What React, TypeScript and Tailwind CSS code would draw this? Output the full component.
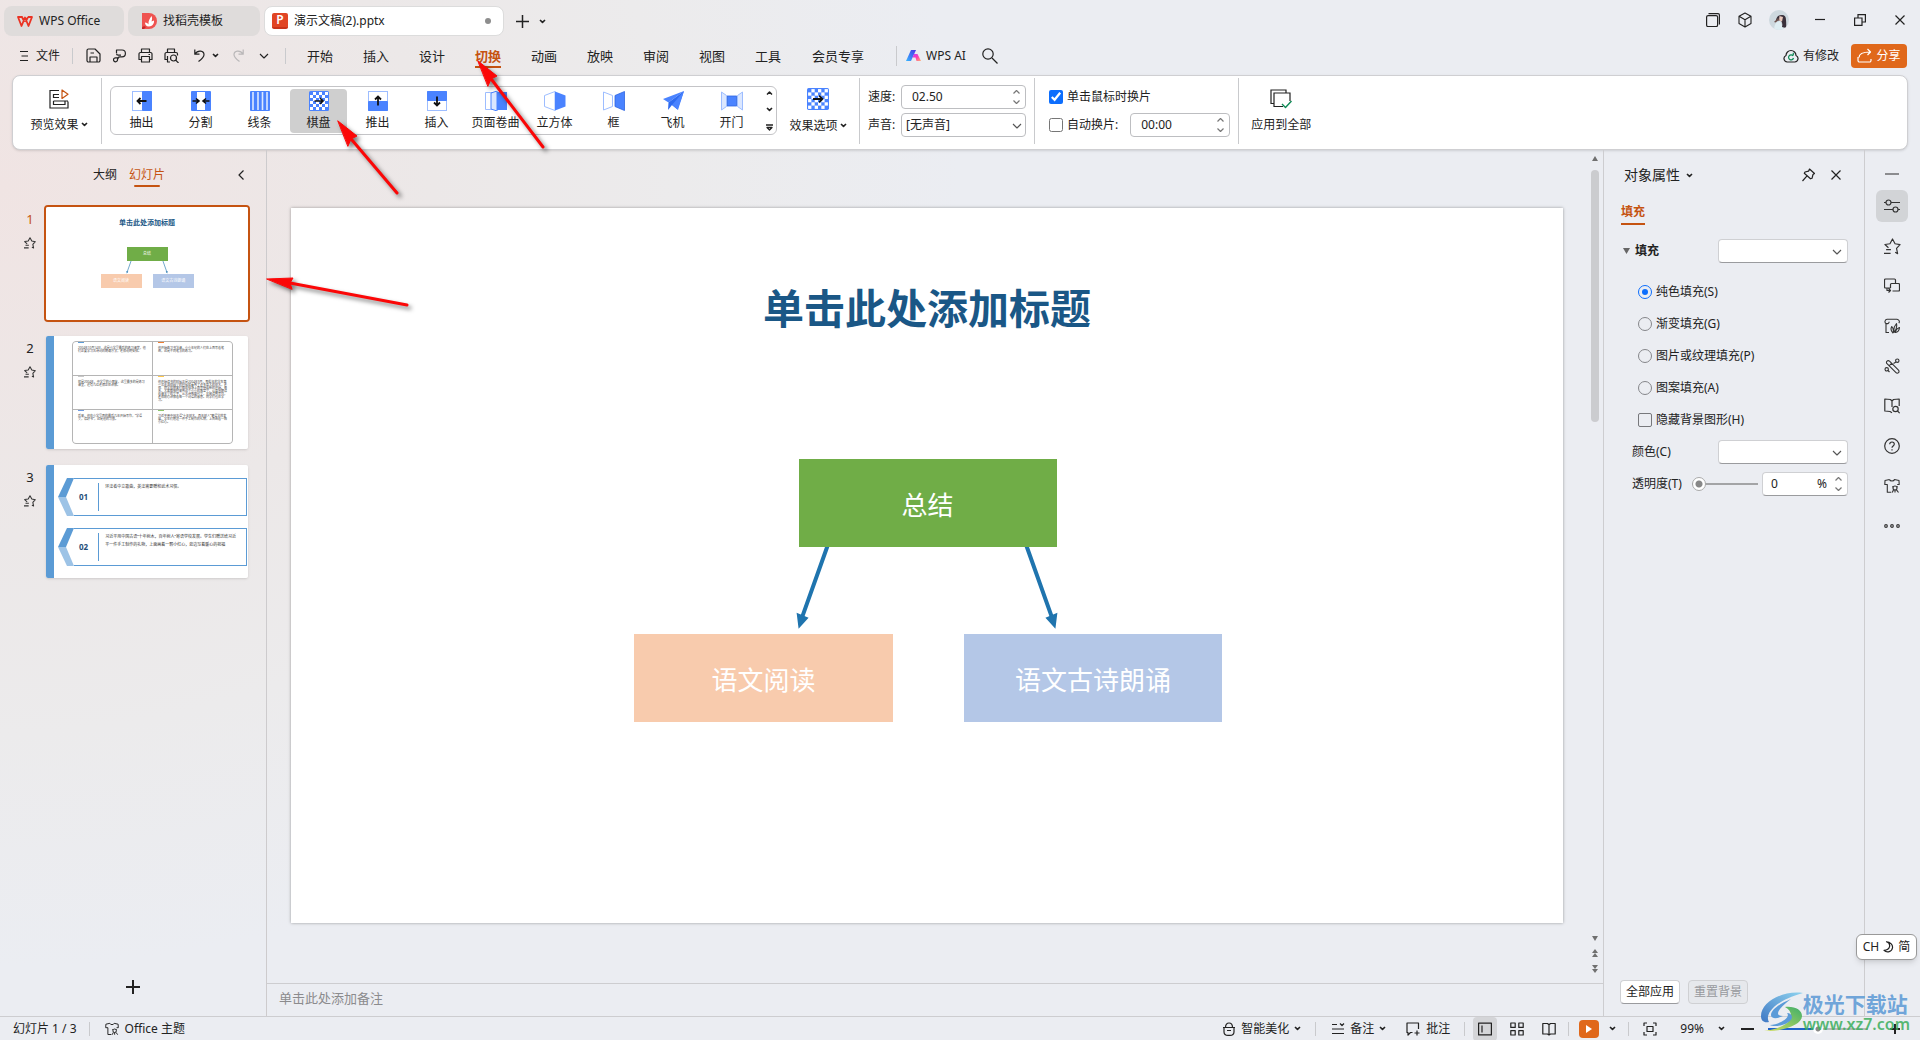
import React from 'react';

type Kids = { children?: React.ReactNode };

function Ico({ w = 16, h, vb, cls = '', sw = 1.2, children }: Kids & { w?: number; h?: number; vb?: string; cls?: string; sw?: number }) {
  const hh = h ?? w;
  return (
    <svg
      width={w}
      height={hh}
      viewBox={vb ?? `0 0 ${w} ${hh}`}
      fill="none"
      stroke="currentColor"
      strokeWidth={sw}
      strokeLinejoin="round"
      className={`shrink-0 ${cls}`}
      aria-hidden="true"
    >
      {children}
    </svg>
  );
}

const Caret = ({ cls = '' }: { cls?: string }) => (
  <Ico w={7} h={5} sw={1.6} cls={cls}><path d="M1 1l2.5 2.4L6 1" /></Ico>
);
const Chevron = ({ cls = '' }: { cls?: string }) => (
  <Ico w={10} h={6} sw={1.1} cls={cls}><path d="M1 1l4 4 4-4" /></Ico>
);
const Rule = ({ cls = '' }: { cls?: string }) => <span className={`w-px shrink-0 bg-[#c9cacd] ${cls}`} />;

function Spinner() {
  return (
    <span className="flex shrink-0 flex-col gap-1.5 text-[#777]">
      <Ico w={7} h={4}><path d="M.5 3.5l3-3 3 3" /></Ico>
      <Ico w={7} h={4}><path d="M.5 .5l3 3 3-3" /></Ico>
    </span>
  );
}

/* ---------- shared icons ---------- */

const StarMotion = ({ size }: { size: number }) => (
  <Ico w={size} vb="0 0 16 16" sw={size < 14 ? 1.4 : 1.1}>
    <path d="M4.200 9.200L.9 6.100l4.700-.7L8 .9l2.400 4.500 4.700.8-3.300 3.500 1 5-2.300-1.200" />
    <path d="M2 11h4.500M0 14.500h6.200" />
  </Ico>
);

const Shirt = ({ size }: { size: number }) => (
  <Ico w={size} vb="0 0 16 16" sw={1.1}>
    <path d="M5.5 1.500L1 2.500.8 6.500h2.500v7.800h4M5.500 1.500c.5 2 4.500 2 5 0L15 2.500l.2 4h-2" />
    <circle cx="11" cy="10" r="2" />
    <path d="M9.500 11.800l-1.200 2.700M12.500 11.800l2 2.700M11 12v2.500M8.300 8.500l1 .6M13.700 8.500l-1 .6" />
  </Ico>
);

/* ---------- title bar ---------- */

function TitleBar() {
  return (
    <header className="flex h-9 items-end pl-1 pr-[15px]">
      <div className="flex gap-1">
        <button className="flex h-[30px] w-[120px] items-center gap-1.5 rounded-lg bg-[#dfdcdb] pl-[13px]">
          <Ico w={16} h={11} sw={1.8} cls="text-[#ea3323]">
            <path d="M1 1h4l-.2 0L1 1l3.500 9L8 1.500 11.500 10 15 1h-4M5 1l2.500 5M8.500 6L11 1" />
          </Ico>
          <span>WPS Office</span>
        </button>
        <button className="flex h-[30px] w-[132px] items-center gap-1.5 rounded-lg bg-[#dfdcdb] pl-[14px]">
          <svg width="15" height="16" viewBox="0 0 15 16" className="shrink-0" aria-hidden="true">
            <path d="M0 0h7a8 8 0 0 1 0 16H0z" fill="#ef5350" />
            <path d="M0 14.500q2-2 4-.5L2 16H0z" fill="#c62828" />
            <path d="M7 13.500c-3 0-4-2-4-4 2 0 3 1 3.500 2C6 8 8 5 9.500 3c1 2 .5 4 0 5.500L12 7.500c.5 3-2 6-5 6z" fill="#fff" />
          </svg>
          <span>找稻壳模板</span>
        </button>
        <button className="flex h-[30px] w-60 items-center gap-1.5 rounded-lg border border-[#dcdcdc] bg-white pl-[7px] pr-3">
          <span className="flex size-4 items-center justify-center rounded-xs border-b-2 border-[#c9341b] bg-[#e14524] text-xs font-semibold text-white">P</span>
          <span>演示文稿(2).pptx</span>
          <span className="ml-auto size-1.5 rounded-full bg-[#8d8d8d]" />
        </button>
      </div>
      <div className="flex h-[30px] items-center">
        <button aria-label="新建标签" className="ml-3"><Ico w={13} sw={1.5}><path d="M6.500 0v13M0 6.500h13" /></Ico></button>
        <button aria-label="标签列表" className="ml-2.5"><Caret /></button>
      </div>
      <div className="ml-auto flex h-8 items-center">
        <button aria-label="窗口">
          <Ico w={14}><rect x=".6" y="2.600" width="11" height="11" rx="1.500" /><path d="M2.500 .6H12a1.400 1.400 0 0 1 1.400 1.400v9.500" /></Ico>
        </button>
        <button aria-label="组件" className="ml-[18px]">
          <Ico w={14} h={16} sw={1.100}><path d="M7 1l6 3.300v7.200L7 15l-6-3.500V4.300zM1.500 4.600L7 7.800l5.500-3.200M7 7.800V15" /></Ico>
        </button>
        <button aria-label="账号" className="ml-[17px] size-5 overflow-hidden rounded-full">
          <svg width="20" height="20" viewBox="0 0 20 20" aria-hidden="true">
            <rect width="20" height="20" fill="#cdd8de" />
            <path d="M5 20q0-8 6-9l4 9z" fill="#dfeef3" />
            <path d="M7 10q1-5 6-5 4 0 4 5 .5 5 0 8l-4-1q1-4-1-6z" fill="#39303a" />
            <path d="M10.500 6l3.500 1-1 4.500-3-1z" fill="#e9c9bd" />
            <path d="M5 12l4-4 1.500 1.500-4 3z" fill="#6a4f4a" />
          </svg>
        </button>
        <button aria-label="最小化" className="ml-[26px]"><Ico w={10} h={12}><path d="M0 5.500h10" /></Ico></button>
        <button aria-label="还原" className="ml-[29px]">
          <Ico w={12}><path d="M.6 4h7.400v7.400H.6zM4 4V.6h7.400V8H8" strokeLinejoin="miter" /></Ico>
        </button>
        <button aria-label="关闭" className="ml-[29px]"><Ico w={10}><path d="M.5 .5l9 9M9.500 .5l-9 9" /></Ico></button>
      </div>
    </header>
  );
}

/* ---------- menu row ---------- */

const menuTabs = ['开始', '插入', '设计', '切换', '动画', '放映', '审阅', '视图', '工具'];

function QuickButton({ label, children }: Kids & { label: string }) {
  return (
    <button aria-label={label} className="flex h-6 w-[26px] items-center justify-center">{children}</button>
  );
}

function MenuRow() {
  return (
    <nav className="flex h-[39px] items-center pl-5 pr-[13px]">
      <button className="flex items-center gap-2">
        <Ico w={8} h={12}><path d="M0 1.500h8M1.500 6H8M0 10.500h8" /></Ico>文件
      </button>
      <Rule cls="ml-3 mr-[7px] h-4" />
      <QuickButton label="保存">
        <Ico w={15}><path d="M1 2.500A1.500 1.500 0 0 1 2.500 1H9l5 5v6.500a1.500 1.500 0 0 1-1.500 1.500h-10A1.500 1.500 0 0 1 1 12.500zM4 14V9h7v5M4.500 5h3.500" /></Ico>
      </QuickButton>
      <QuickButton label="输出为PDF">
        <Ico w={13} h={14}><path d="M3.500 4V1H9a3.200 3.200 0 0 1 0 6.800H7c-2 0-2.500 1.200-2.500 2.900A2 2 0 1 1 2.500 8.800H6M3.500 4.500c0 1 .6 1.600 1.600 1.600H8" /></Ico>
      </QuickButton>
      <QuickButton label="打印">
        <Ico w={15}><path d="M3.500 4.500V1h8v3.500M3.500 11.500H1V6a1.500 1.500 0 0 1 1.500-1.500h10A1.500 1.500 0 0 1 14 6v5.500h-2.500M3.500 8.500h8V14h-8zM10.500 6.500h1.500" /></Ico>
      </QuickButton>
      <QuickButton label="打印预览">
        <Ico w={15}><path d="M3.500 4.500V1h7v3.500M4 11.500H1V6a1.500 1.500 0 0 1 1.500-1.500h9.500A1.500 1.500 0 0 1 13.500 6v1.500M3.500 8v6H6" /><circle cx="9.500" cy="10" r="3" /><path d="M11.700 12.200L14.500 15" /></Ico>
      </QuickButton>
      <div className="ml-0.5 flex items-center">
        <QuickButton label="撤销"><Ico w={11} h={13}><path d="M.8 .5v4.700h4.700M1 5C4 .5 10 1.500 10 5.800 10 8.500 8 10 4.500 12.500" /></Ico></QuickButton>
        <Caret />
      </div>
      <span className="ml-1.5 text-[#b9b7b8]">
        <QuickButton label="恢复"><Ico w={11} h={13}><path d="M10.200 .5v4.700H5.500M10 5C7 .5 1 1.500 1 5.800 1 8.500 3 10 6.500 12.500" /></Ico></QuickButton>
      </span>
      <QuickButton label="更多"><Chevron /></QuickButton>
      <Rule cls="ml-2 mr-1.5 h-4" />
      {menuTabs.map((t) => (
        <button
          key={t}
          className={`flex w-14 justify-center text-[13px] ${t === '切换' ? 'font-bold text-[#c55311]' : ''}`}
        >
          <span className={`border-b-2 pt-0.5 leading-5 ${t === '切换' ? 'border-[#c55311]' : 'border-transparent'}`}>{t}</span>
        </button>
      ))}
      <button className="w-[84px] text-[13px]">会员专享</button>
      <Rule cls="ml-4 h-5" />
      <button className="ml-[9px] flex items-center gap-[5px]">
        <svg width="15" height="11" viewBox="0 0 15 11" aria-hidden="true">
          <defs>
            <linearGradient id="aiBlue" x1="0" y1="1" x2="1" y2="0"><stop offset="0" stopColor="#35b6ff" /><stop offset="1" stopColor="#4a35e8" /></linearGradient>
            <linearGradient id="aiPink" x1="0" y1="0" x2="1" y2="1"><stop offset="0" stopColor="#c13cff" /><stop offset=".5" stopColor="#ff3fb0" /><stop offset="1" stopColor="#ffb26b" /></linearGradient>
          </defs>
          <path d="M5 0h5L5 11H0z" fill="url(#aiBlue)" />
          <path d="M8 4h3.500L15 11h-4.500L9.500 7.500H6.500z" fill="url(#aiPink)" />
        </svg>
        WPS AI
      </button>
      <button aria-label="搜索" className="ml-4"><Ico w={16}><circle cx="6" cy="6" r="5.200" /><path d="M10 10l5.500 5.500" /></Ico></button>
      <button className="ml-auto flex items-center gap-1">
        <Ico w={16} h={14}>
          <path d="M4.200 13A3.400 3.400 0 0 1 3 6.500a5 5 0 0 1 10 0A3.400 3.400 0 0 1 11.800 13z" />
          <path d="M10 6.800A2.500 2.500 0 1 0 10.500 9M8 6h2.300V3.800" stroke="#0d8a55" />
        </Ico>
        有修改
      </button>
      <button className="ml-3 flex h-6 w-14 items-center justify-center gap-1 rounded-sm bg-[#e0681b] text-white">
        <Ico w={15}><path d="M1 9v3.500A1.500 1.500 0 0 0 2.500 14h10a1.500 1.500 0 0 0 1.500-1.500V11M2 9.500c0-4 3-5.500 11-5.500M10.500 1l3 3-3 3" /></Ico>
        分享
      </button>
    </nav>
  );
}

/* ---------- ribbon ---------- */

const BLUE = '#4a83ff';
const PALE = '#9dbdff';

function Checker({ size }: { size: number }) {
  const cells: React.ReactNode[] = [];
  for (let r = 0; r < 6; r++)
    for (let c = 0; c < 6; c++)
      if ((r + c) % 2 === 1) cells.push(<rect key={`${r}-${c}`} x={1 + c * 3} y={1 + r * 3} width="3" height="3" fill="#fff" />);
  return (
    <svg width={size} height={size} viewBox="0 0 20 20" aria-hidden="true">
      <rect width="20" height="20" rx="1.500" fill={BLUE} />
      {cells}
      <path d="M5.500 10h8.500M11 7l3 3-3 3" stroke="#111" strokeWidth="1.600" fill="none" />
    </svg>
  );
}

function GalleryIcon({ kind }: { kind: string }) {
  if (kind === '棋盘') return <Checker size={20} />;
  const body: Record<string, React.ReactNode> = {
    抽出: <><rect x=".5" y=".5" width="19" height="19" fill="#fff" stroke={PALE} /><rect x="10" width="10" height="20" rx="1" fill={BLUE} /><path d="M5.500 10h9M8.500 7l-3 3 3 3" stroke="#111" strokeWidth="1.800" /></>,
    分割: <><rect width="20" height="20" rx="1" fill={BLUE} /><rect x="6" y="1" width="8" height="18" fill="#fff" /><path d="M1.500 10h6M5 7.500L8 10l-3 2.500M18.500 10h-6M15 7.500L12 10l3 2.500" stroke="#111" strokeWidth="1.600" /></>,
    线条: <><rect width="20" height="20" rx="1" fill={BLUE} /><path d="M3 1v18M8 1v18M12.500 1v18M17 1v18" stroke="#dce8ff" strokeWidth="1.600" /></>,
    推出: <><rect x=".5" y=".5" width="19" height="19" fill="#fff" stroke={PALE} /><rect y="10" width="20" height="10" rx="1" fill={BLUE} /><path d="M10 14.500V5.500M7 8.500l3-3 3 3" stroke="#111" strokeWidth="1.800" /></>,
    插入: <><rect x=".5" y=".5" width="19" height="19" fill="#fff" stroke={PALE} /><rect width="20" height="10" rx="1" fill={BLUE} /><path d="M10 5.500v9M7 11.500l3 3 3-3" stroke="#111" strokeWidth="1.800" /></>,
    页面卷曲: <><path d="M-.5 1.500h10v17h-10z" fill="#fff" stroke={PALE} /><path d="M5 2l6-2v20l-6-2z" fill="#dbe7ff" stroke={BLUE} /><path d="M11 1h10v18H11z" fill={BLUE} /></>,
    立方体: <><path d="M10 .5L-.5 4.500v11L10 19.500z" fill="#fff" stroke={PALE} /><path d="M10 .5l10.500 4v11L10 19.500z" fill={BLUE} /></>,
    框: <><path d="M-.5 1l9 3.500v11L-.5 19z" fill="#fff" stroke={PALE} /><path d="M20.500 .5l-9.500 4v11l9.500 4z" fill={BLUE} stroke="#2f66e0" strokeWidth=".8" /></>,
    飞机: <><path d="M21 0L0 8l5.500 3.500z" fill={BLUE} /><path d="M21 0L5.500 11.500 5 19l4-5 5.500 4.500z" fill="#2f6bf0" /><path d="M21 0L9 14l6 5z" fill={BLUE} /></>,
    开门: <><path d="M-.5 1l5 3.500v11l-5 3.500zM20.500 1l-5 3.500v11l5 3.500z" fill="#dbe7ff" stroke={PALE} /><rect x="5.500" y="5" width="9" height="10" fill={BLUE} stroke="#2f66e0" strokeWidth=".8" /></>,
  };
  return (
    <svg width="22" height="20" viewBox="-1 0 22 20" fill="none" aria-hidden="true">{body[kind]}</svg>
  );
}

const effects = ['抽出', '分割', '线条', '棋盘', '推出', '插入', '页面卷曲', '立方体', '框', '飞机', '开门'];
const field = 'flex h-6 items-center rounded-sm border border-[#bdbec1] bg-white';

function Ribbon() {
  return (
    <section className="mx-3 flex h-[75px] items-center rounded-lg border border-[#cfcfd2] bg-white pb-1 shadow-sm">
      <button className="ml-1 flex w-[84px] flex-col items-center gap-2">
        <Ico w={20}>
          <path d="M10 1.500H1v17.500h18v-6.500M10 5.500H4.500v3H10M4.500 12H19M4.500 12v3.500H16V12" strokeLinejoin="miter" />
          <path d="M13 1v8.500l6-4.200z" stroke="#c55311" />
        </Ico>
        <span className="flex items-center gap-0.5">预览效果<Caret /></span>
      </button>
      <Rule cls="h-[66px]" />
      <div className="ml-2 flex h-[49px] items-center gap-0.5 rounded-md border border-[#c4c4c7] pl-0.5">
        {effects.map((e) => (
          <button
            key={e}
            className={`flex h-11 w-[57px] flex-col items-center gap-1 rounded-sm pt-0.5 ${e === '棋盘' ? 'bg-[#cfcfcf]' : ''}`}
          >
            <GalleryIcon kind={e} />
            <span className="leading-4">{e}</span>
          </button>
        ))}
        <div className="flex w-3.5 flex-col items-center gap-3">
          <Ico w={7} h={4} sw={1.500}><path d="M1 3.500l2.500-2.500 2.500 2.500" /></Ico>
          <Caret />
          <Ico w={7} h={7} sw={1.300}><path d="M0 1h7M1 3.500l2.500 2.500 2.500-2.500z" /></Ico>
        </div>
      </div>
      <button className="flex w-[82px] flex-col items-center gap-2">
        <Checker size={22} />
        <span className="flex items-center gap-0.5">效果选项<Caret /></span>
      </button>
      <Rule cls="h-[66px]" />
      <div className="ml-2 grid grid-cols-[33px_125px] items-center gap-y-1">
        <label htmlFor="speed">速度:</label>
        <div className={`${field} pl-2.5 pr-[5px]`}>
          <input id="speed" defaultValue="02.50" className="w-0 flex-1 outline-none" />
          <Spinner />
        </div>
        <label htmlFor="sound">声音:</label>
        <div className="relative">
          <select id="sound" className={`${field} w-full appearance-none pl-1`}>
            <option>[无声音]</option>
          </select>
          <Chevron cls="pointer-events-none absolute right-1 top-2.5 text-[#555]" />
        </div>
      </div>
      <Rule cls="ml-2 h-[66px]" />
      <div className="ml-3.5 flex flex-col gap-1">
        <label className="flex h-6 items-center gap-1">
          <input type="checkbox" defaultChecked className="size-3.5 accent-[#0d6efd]" />单击鼠标时换片
        </label>
        <div className="flex h-6 items-center gap-3">
          <label className="flex items-center gap-1">
            <input type="checkbox" className="size-3.5" />自动换片:
          </label>
          <div className={`${field} w-[100px] pl-2.5 pr-[5px]`}>
            <input aria-label="自动换片时间" defaultValue="00:00" className="w-0 flex-1 outline-none" />
            <Spinner />
          </div>
        </div>
      </div>
      <Rule cls="ml-2 h-[66px]" />
      <button className="ml-3 flex flex-col items-center gap-2">
        <Ico w={22} h={20}>
          <path d="M4 14.500H1V1h15v3M13 17.500H4V4h16v8" strokeLinejoin="miter" />
          <path d="M12 15l3.500 3.500L21.500 12" stroke="#0d8a55" strokeWidth="1.400" />
        </Ico>
        应用到全部
      </button>
    </section>
  );
}

/* ---------- slides ---------- */

function SummarySlide({ titleCls, nodeCls }: { titleCls: string; nodeCls: string }) {
  const node = 'absolute flex h-[12.3%] w-[20.3%] items-center justify-center text-white';
  return (
    <div className="relative size-full bg-white">
      <h1 className={`absolute inset-x-0 top-[8%] flex h-[12%] items-center justify-center font-bold text-[#1a5786] ${titleCls}`}>单击此处添加标题</h1>
      <svg viewBox="0 0 1273 716" className="absolute inset-0 size-full" aria-hidden="true">
        <path d="M537 338L511 411M736 338L762 411" stroke="#1f74ae" strokeWidth="4" />
        <path d="M508 421L506 405L518 410zM765 421L767 405L755 410z" fill="#1f74ae" />
      </svg>
      <div className={`${node} left-[39.9%] top-[35.1%] bg-[#70ad47] ${nodeCls}`}>总结</div>
      <div className={`${node} left-[27%] top-[59.6%] bg-[#f8cbad] ${nodeCls}`}>语文阅读</div>
      <div className={`${node} left-[52.9%] top-[59.6%] bg-[#b4c7e7] ${nodeCls}`}>语文古诗朗诵</div>
    </div>
  );
}

const cells = [
  { c: 'bg-[#5b9bd5]', t: '2004年10月14日，这是小学里最后的练习课堂，他们正要学习古诗词的朗诵方法，老师说明安排。' },
  { c: 'bg-[#ed7d31]', t: '他开始练习书法课，小小年纪的人们在上面写着笔画，这是不同笔法的练习。' },
  { c: 'bg-[#c9c9c9]', t: '就是2004年，中学里的小朋友，这里最多的是练习课堂，还有几位老师正在讲解。' },
  { c: 'bg-[#ffc94d]', t: '他开始读书的时候正是2004年9月，那些年的学生第一次走进校园里的时候就看到了许多高大的树木，老师、同学和朋友们都在操场上面等待着新的开始。每天，大家都按时来到这个小小的教室里，认真地朗读着课本里的文字，从古诗到现代文，从阅读到写作，老师耐心讲解着每一个词语的意思。同学们也在学习。' },
  { c: 'bg-[#6f9be0]', t: '后来，他在小学里面的最后几年开始写作，“学语文，读好书”，这是他的习惯。' },
  { c: 'bg-[#8cc56a]', t: '习近平用中国古语“十年树木，百年树人”寄语学校发展，学生们赠送一件手工制作的礼物，上面画着一颗小红心。' },
];

function GridSlide() {
  return (
    <div className="flex size-full bg-white">
      <div className="w-2 shrink-0 bg-[#5b9bd5]" />
      <div className="mb-[5px] ml-[18px] mr-[15px] mt-[5px] grid min-w-0 flex-1 grid-cols-2 grid-rows-3 gap-px overflow-hidden rounded-sm border border-[#b5b5b5] bg-[#b5b5b5]">
        {cells.map((x) => (
          <div key={x.t} className="min-w-0 bg-white px-[5px]">
            <div className={`h-px w-1.5 ${x.c}`} />
            <p className="mt-1 text-[3px] leading-[3px] text-[#444]">{x.t}</p>
          </div>
        ))}
      </div>
    </div>
  );
}

function ListSlide() {
  const rows = [
    ['01', '环法者中立歌曲，英法需要赠和武术习惯。'],
    ['02', '习近平用中国古语“十年树木，百年树人”寄语学校发展。学生们赠送给习近平一件手工制作的礼物，上面画着一颗小红心，旁边写着暖心的祝福'],
  ];
  return (
    <div className="flex size-full bg-white">
      <div className="w-2 shrink-0 bg-[#5b9bd5]" />
      <div className="ml-1 mr-px flex min-w-0 flex-1 flex-col gap-3 pt-[13px]">
        {rows.map(([n, t]) => (
          <div key={n} className="flex h-[38px]">
            <svg width="16" height="38" viewBox="0 0 16 38" className="shrink-0" aria-hidden="true">
              <path d="M9 0h7L8 19H0z" fill="#5b9bd5" />
              <path d="M0 19h8l8 19H9z" fill="#9dc3e6" />
            </svg>
            <div className="flex min-w-0 flex-1 border-y border-r border-[#5b9bd5] py-1 pl-[5px]">
              <span className="self-center text-[8px] font-bold text-[#1f4e79]">{n}</span>
              <span className="ml-2.5 w-px shrink-0 bg-[#5b9bd5]" />
              <p className="ml-1.5 mr-2 min-w-0 flex-1 text-[4px] leading-[8px] text-[#333]">{t}</p>
            </div>
          </div>
        ))}
      </div>
    </div>
  );
}

function Thumb({ n, active, children }: Kids & { n: number; active?: boolean }) {
  return (
    <li className="flex">
      <div className={`flex w-[38px] shrink-0 flex-col items-center gap-2.5 pl-[22px] pt-1 text-[13px] ${active ? 'text-[#c55311]' : ''}`}>
        <span>{n}</span>
        <span className="text-[#333]"><StarMotion size={12} /></span>
      </div>
      <button
        aria-label={`幻灯片 ${n}`}
        className={`ml-2 h-[113px] w-[202px] shrink-0 overflow-hidden rounded-xs text-left shadow-sm ${active ? 'outline-2 outline-[#c55311]' : ''}`}
      >
        <div className="size-full whitespace-normal">{children}</div>
      </button>
    </li>
  );
}

function SlidePanel() {
  return (
    <aside className="flex w-[267px] shrink-0 flex-col border-r border-[#cdcbcd]">
      <div className="flex h-[49px] items-center pr-[22px]">
        <button className="ml-[93px]">大纲</button>
        <button className="relative ml-3 text-[#c55311]">
          幻灯片
          <span className="absolute inset-x-[5px] -bottom-1 h-0.5 rounded bg-[#c55311]" />
        </button>
        <button aria-label="收起" className="ml-auto"><Ico w={6} h={10}><path d="M5.500 .5L1 5l4.500 4.500" /></Ico></button>
      </div>
      <ol className="mt-2 flex flex-col gap-4">
        <Thumb n={1} active><SummarySlide titleCls="text-[7px]" nodeCls="text-[4px]" /></Thumb>
        <Thumb n={2}><GridSlide /></Thumb>
        <Thumb n={3}><ListSlide /></Thumb>
      </ol>
      <button aria-label="新建幻灯片" className="mx-auto mb-[22px] mt-auto"><Ico w={14} sw={2}><path d="M7 0v14M0 7h14" /></Ico></button>
    </aside>
  );
}

function Editor() {
  return (
    <main className="flex min-w-0 flex-1 flex-col">
      <div className="flex flex-1">
        <div className="flex-1 pl-6 pr-6 pt-[58px]">
          <div className="aspect-[1273/716] w-full shadow-[0_0_3px_rgba(0,0,0,0.35)]">
            <SummarySlide titleCls="text-[41px]" nodeCls="pt-1 text-[26px]" />
          </div>
        </div>
        <div className="flex w-4 flex-col items-center pb-2.5 pt-1.5 text-[#707070]">
          <svg width="6" height="5" aria-hidden="true"><path d="M0 5l3-5 3 5z" fill="currentColor" /></svg>
          <div className="mt-[9px] h-[252px] w-2 rounded-full bg-[#cbcccf]" />
          <div className="mt-auto flex flex-col items-center gap-2">
            <svg width="6" height="5" aria-hidden="true"><path d="M0 0l3 5 3-5z" fill="currentColor" /></svg>
            <svg width="6" height="8" aria-hidden="true"><path d="M0 4l3-4 3 4zM0 8l3-4 3 4z" fill="currentColor" /></svg>
            <svg width="6" height="8" aria-hidden="true"><path d="M0 0l3 4 3-4zM0 4l3 4 3-4z" fill="currentColor" /></svg>
          </div>
        </div>
      </div>
      <div className="flex h-[33px] shrink-0 items-center border-t border-[#cdcdd0] pb-1 pl-3 text-[13px]">
        <input aria-label="备注" placeholder="单击此处添加备注" className="w-full bg-transparent outline-none placeholder:text-[#8b8b8d]" />
      </div>
    </main>
  );
}

/* ---------- properties ---------- */

const fills = ['纯色填充(S)', '渐变填充(G)', '图片或纹理填充(P)', '图案填充(A)'];
const panelField = 'h-6 rounded-sm border border-[#cfd0d3] border-b-[#9a9b9e] bg-white';

function PanelSelect({ label }: { label: string }) {
  return (
    <div className="relative ml-auto w-[130px]">
      <select aria-label={label} className={`${panelField} block w-full appearance-none`} />
      <Chevron cls="pointer-events-none absolute right-1.5 top-2.5 text-[#555]" />
    </div>
  );
}

function Properties() {
  return (
    <aside className="flex w-[261px] shrink-0 flex-col border-l border-[#cdcdd0] pl-4 pr-4">
      <div className="flex h-[50px] shrink-0 items-center pl-1 pr-[7px]">
        <button className="flex items-center gap-1.5 text-sm">对象属性<Caret /></button>
        <button aria-label="固定" className="ml-auto">
          <Ico w={13} h={14}><path d="M7.500 1l5 4.500-1.500 1-1 3.800-1.500.5L2.300 5.300 3 4l3.500-.8zM4.800 8.200L.5 13" /></Ico>
        </button>
        <button aria-label="关闭面板" className="ml-4"><Ico w={10}><path d="M.5 .5l9 9M9.500 .5l-9 9" /></Ico></button>
      </div>
      <button className="ml-px h-[25px] self-start border-b-2 border-[#c55311] font-bold text-[#c55311]">填充</button>
      <div className="mt-3.5 flex h-6 items-center">
        <svg width="7" height="6" className="ml-[3px] mr-[5px]" aria-hidden="true"><path d="M0 0h7L3.500 6z" fill="#666" /></svg>
        <b>填充</b>
        <PanelSelect label="填充样式" />
      </div>
      <fieldset className="mt-[13px] pl-[18px]">
        {fills.map((f, i) => (
          <label key={f} className="flex h-8 items-center gap-1">
            <input
              type="radio"
              name="fill"
              defaultChecked={i === 0}
              className="size-3.5 appearance-none rounded-full border border-[#85868a] p-[3px] checked:border-[#0d6efd] checked:bg-[#0d6efd] checked:bg-clip-content"
            />
            {f}
          </label>
        ))}
        <label className="flex h-8 items-center gap-1">
          <input type="checkbox" className="size-3.5 appearance-none rounded-xs border border-[#77787c]" />隐藏背景图形(H)
        </label>
      </fieldset>
      <div className="flex h-8 items-center pl-3">颜色(C)<PanelSelect label="颜色" /></div>
      <div className="flex h-8 items-center pl-3">
        <label htmlFor="alpha" className="w-[60px]">透明度(T)</label>
        <input
          id="alpha"
          type="range"
          defaultValue={0}
          className="h-4 w-[66px] appearance-none bg-transparent [&::-webkit-slider-runnable-track]:h-0.5 [&::-webkit-slider-runnable-track]:bg-[#a3a4a6] [&::-webkit-slider-thumb]:-mt-1.5 [&::-webkit-slider-thumb]:size-3.5 [&::-webkit-slider-thumb]:appearance-none [&::-webkit-slider-thumb]:rounded-full [&::-webkit-slider-thumb]:border [&::-webkit-slider-thumb]:border-[#aaa] [&::-webkit-slider-thumb]:bg-[radial-gradient(circle,#888_0_3px,#fff_4px)]"
        />
        <div className={`${panelField} ml-auto flex w-[86px] items-center pl-2 pr-[5px]`}>
          <input aria-label="透明度数值" defaultValue="0" className="w-0 flex-1 outline-none" />
          <span className="mr-2">%</span>
          <Spinner />
        </div>
      </div>
      <div className="mb-3 mt-auto flex gap-2">
        <button className={`${panelField} w-[60px]`}>全部应用</button>
        <button disabled className="h-6 w-[60px] rounded-sm border border-[#cfd0d3] bg-[#e6e8ec] text-[#97999d]">重置背景</button>
      </div>
    </aside>
  );
}

function SideTools() {
  const tool = 'flex size-8 items-center justify-center rounded-md';
  return (
    <aside className="flex w-14 shrink-0 flex-col items-center border-l border-[#cdcdd0] pr-px pt-2 text-[#333]">
      <button aria-label="折叠" className={tool}><span className="h-0.5 w-3.5 bg-[#8b8c8f]" /></button>
      <div className="flex flex-col gap-2">
        <button aria-label="属性" className={`${tool} bg-[#d2d4d7]`}>
          <Ico w={16}><circle cx="4.500" cy="4.500" r="2.500" /><circle cx="11.500" cy="11.500" r="2.500" /><path d="M0 4.500h2M7 4.500h9M0 11.500h9M14 11.500h2" /></Ico>
        </button>
        <button aria-label="动画" className={tool}><StarMotion size={17} /></button>
        <button aria-label="切换版式" className={tool}>
          <Ico w={16}><path d="M6.500 10H1.500a1 1 0 0 1-1-1V2a1 1 0 0 1 1-1h9a1 1 0 0 1 1 1v3.500M3 10v2.500h3.500M4.500 10.500l2 2-2 2M6.500 10V6.500a1 1 0 0 1 1-1h7a1 1 0 0 1 1 1V12a1 1 0 0 1-1 1h-6" /></Ico>
        </button>
        <button aria-label="素材" className={tool}>
          <Ico w={16} sw={1.1}>
            <path d="M5 14.500H2V5.500M2 5.500C.5 5 .5 1.500 3 1.200h10c2.500.3 2.800 2.800 1.800 4M2 5.500c1.800.5 3-.2 3.200-1.700" />
            <path d="M7.800 8.500q-2 3.200 1 6.500 1.500-3.500-1-6.500zM12.500 5.500q-3.500 4-2.500 9 3.500-3.500 2.500-9zM15.500 9.500q-3.800 1.500-4 5 3.500-.5 4-5z" />
          </Ico>
        </button>
        <button aria-label="智能工具" className={tool}>
          <Ico w={16} sw={1.1}>
            <path d="M3 3.200a1.700 1.700 0 0 1 2.500 0l9 9a1.700 1.700 0 0 1-2.500 2.500l-9-9a1.700 1.700 0 0 1 0-2.500zM5 7.800L7.500 5.300" />
            <circle cx="13.300" cy="2.700" r="1.700" /><circle cx="2.700" cy="11.300" r="1.700" />
            <path d="M9.500 5.500l2.500-1.500M4 12.500l1.500 1.500" />
          </Ico>
        </button>
        <button aria-label="查阅" className={tool}>
          <Ico w={16}><path d="M8 3L6.500 1.500.8 1v12l5.200.5 2 1.200M8 3l1.500-1.500L15.200 1v7M8 3v6" /><circle cx="11.500" cy="11" r="2.700" /><path d="M13.500 13l2.200 2.200" /></Ico>
        </button>
        <button aria-label="帮助" className={tool}>
          <Ico w={16}><circle cx="8" cy="8" r="7.300" /><path d="M5.700 6.300c0-3 4.600-3 4.600-.2C10.300 8 8 7.900 8 9.800M8 11.200v1.200" /></Ico>
        </button>
        <button aria-label="主题" className={tool}><Shirt size={16} /></button>
        <button aria-label="更多工具" className={tool}>
          <Ico w={16} h={4}><circle cx="2" cy="2" r="1.300" /><circle cx="8" cy="2" r="1.300" /><circle cx="14" cy="2" r="1.300" /></Ico>
        </button>
      </div>
    </aside>
  );
}

/* ---------- status bar ---------- */

function StatusBar() {
  return (
    <footer className="flex h-6 shrink-0 items-center border-t border-[#cdcdd0] pl-[13px] pr-5">
      <span>幻灯片 1 / 3</span>
      <Rule cls="ml-3 h-3.5" />
      <button className="ml-[15px] flex items-center gap-1.5"><Shirt size={14} />Office 主题</button>
      <div className="ml-auto flex items-center">
        <button className="flex items-center gap-[5px]">
          <Ico w={14}><path d="M2 5.500h10M3.500 5.500C3.500 2.500 5 1 7 1s3.500 1.500 3.500 4.500M2 5.500V10a4 3.500 0 0 0 4 3.400h2A4 3.500 0 0 0 12 10V5.500M5 8.500h4M1 5.500h1M12 5.500h1" /></Ico>
          智能美化<Caret />
        </button>
        <Rule cls="ml-3.5 h-3.5" />
        <button className="ml-4 flex items-center gap-[5px]">
          <Ico w={13} h={12}><path d="M0 1.500h5M8 .5l2 2 2-2M0 6h12M0 10.500h12" /></Ico>
          备注<Caret />
        </button>
        <button className="ml-5 flex items-center gap-1.5">
          <Ico w={14}><path d="M6.500 10.500H4.500L2 13v-2.500H1V1h11.500v6M11 8.500v5M8.500 11h5" /></Ico>
          批注
        </button>
        <Rule cls="ml-3.5 h-3.5" />
        <button aria-label="普通视图" className="ml-2 flex h-6 w-6 items-center justify-center rounded-sm bg-[#d4d5d8]">
          <Ico w={14}><rect x=".6" y="1.100" width="12.800" height="11.800" /><path d="M4 3.500v7" /></Ico>
        </button>
        <button aria-label="浏览视图" className="ml-[13px]">
          <Ico w={14}><path d="M.8 1h4.400v4.400H.8zM8.800 1h4.400v4.400H8.800zM.8 8.600h4.400V13H.8zM8.800 8.600h4.400V13H8.800z" /></Ico>
        </button>
        <button aria-label="阅读视图" className="ml-[18px]">
          <Ico w={14}><path d="M7 2.800L5.500 1.500H.8V12H5.500L7 13l1.500-1h4.700V1.500H8.500zM7 2.800V13" /></Ico>
        </button>
        <Rule cls="ml-3 h-3.5" />
        <button aria-label="放映" className="ml-2.5 flex h-[18px] w-5 items-center justify-center rounded-sm bg-[#e0681b]">
          <svg width="6" height="8" aria-hidden="true"><path d="M0 0l6 4-6 4z" fill="#fff" /></svg>
        </button>
        <button aria-label="放映选项" className="ml-2.5"><Caret /></button>
        <Rule cls="ml-3 h-3.5" />
        <button aria-label="适应窗口" className="ml-3.5">
          <Ico w={14}><path d="M1 4V1h3M10 1h3v3M13 10v3h-3M4 13H1v-3M4 4.500h6v5H4z" /></Ico>
        </button>
        <button className="ml-[23px] flex items-center gap-3.5">99%<Caret /></button>
        <button aria-label="缩小" className="ml-4"><Ico w={13} h={12} sw={2}><path d="M0 6h13" /></Ico></button>
        <input
          aria-label="缩放"
          type="range"
          defaultValue={50}
          className="ml-3.5 h-4 w-[100px] appearance-none bg-transparent [&::-webkit-slider-runnable-track]:h-0.5 [&::-webkit-slider-runnable-track]:bg-[linear-gradient(90deg,#1f63c9_50%,#b6b7ba_50%)] [&::-webkit-slider-thumb]:-mt-1 [&::-webkit-slider-thumb]:size-2.5 [&::-webkit-slider-thumb]:appearance-none [&::-webkit-slider-thumb]:rounded-full [&::-webkit-slider-thumb]:bg-[radial-gradient(circle,#888_0_2px,#fff_3px)]"
        />
        <button aria-label="放大" className="ml-[22px]"><Ico w={10} sw={2}><path d="M5 0v10M0 5h10" /></Ico></button>
      </div>
    </footer>
  );
}

/* ---------- overlays ---------- */

function PointerArrows() {
  return (
    <svg width="560" height="330" className="pointer-events-none absolute left-0 top-0 z-10" aria-hidden="true">
      <g fill="#fb0707" stroke="#fb0707" strokeWidth="3" strokeLinecap="round" className="drop-shadow-[3px_3px_2px_rgba(0,0,0,0.5)]">
        <path d="M492 80L543 147M352 140L397 193M290 283L407 305" />
        <path d="M478 61l19 15-6 3-3 7zM338 121l19 15-6 3-3 7zM267 279l26-1-3 5 2 6z" strokeWidth="1" />
      </g>
    </svg>
  );
}

function Watermark() {
  return (
    <div className="pointer-events-none absolute bottom-2 right-2.5 z-10 flex items-center">
      <svg width="42" height="40" viewBox="0 0 42 40" aria-hidden="true">
        <defs>
          <linearGradient id="wmBlue" x1="0" y1="1" x2="1" y2="0"><stop offset="0" stopColor="#3f78c4" /><stop offset="1" stopColor="#8fd3ef" /></linearGradient>
          <linearGradient id="wmGreen" x1="0" y1="1" x2="1" y2="0"><stop offset="0" stopColor="#d6df5c" /><stop offset="1" stopColor="#3fae6a" /></linearGradient>
        </defs>
        <path d="M42 1C22-2 0 10 0 24c0 5 3 7 8 6-4-6 2-20 34-29z" fill="url(#wmBlue)" />
        <path d="M30 7C18 12 10 18 10 23c0 4 6 4 12 1-6 0-6-3-3-7 3-4 7-7 11-10z" fill="#5b9bd8" />
        <path d="M24 15c10-1 17 3 17 9 0 9-20 16-38 15 12-1 27-7 27-15 0-4-2-7-6-9z" fill="url(#wmGreen)" />
        <path d="M26 21c4 4-6 11-17 12 5 3 22-1 22-8 0-2-2-4-5-4z" fill="#5b9bd8" />
      </svg>
      <div className="flex flex-col">
        <span className="text-[21px] font-bold leading-6 text-[#5f9bd6]/90">极光下载站</span>
        <span className="text-base font-semibold leading-4 text-[#3cae5c]/85">www.xz7.com</span>
      </div>
    </div>
  );
}

export default function App() {
  return (
    <div className="relative flex h-screen flex-col overflow-hidden bg-[#ebedf2] bg-[radial-gradient(ellipse_50%_75%_at_0%_18%,#f0e4e3_0%,#ece8e8_45%,#ecebec_70%,#ebedf2_100%)] font-['Noto_Sans','Noto_Sans_CJK_SC',sans-serif] text-xs leading-4 text-[#222] [&_button]:whitespace-nowrap">
      <TitleBar />
      <MenuRow />
      <Ribbon />
      <div className="flex min-h-0 flex-1">
        <SlidePanel />
        <Editor />
        <Properties />
        <SideTools />
      </div>
      <StatusBar />
      <PointerArrows />
      <div className="absolute bottom-20 right-[3px] z-10 flex h-[26px] w-[61px] items-center justify-center gap-1 rounded-md border border-[#999] bg-white shadow-md">
        CH
        <Ico w={11} h={12}><path d="M3.500 .8c5 2 4 8-2.500 8.500 3 3 8 1.500 8.500-2.500C10 3.500 7 1 3.500 .8z" /></Ico>
        简
      </div>
      <Watermark />
    </div>
  );
}
